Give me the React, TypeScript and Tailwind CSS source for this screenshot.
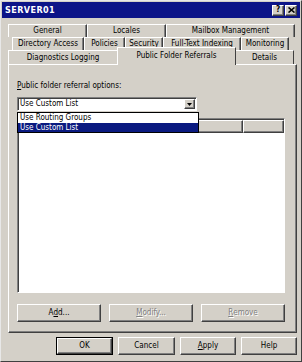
import React from "react";

const raised =
  "bg-[#d4d0c8] border border-t-white border-l-white border-r-[#404040] border-b-[#404040] shadow-[inset_-1px_-1px_0_#808080]";

function Tab({ w, children }: { w: string; children: React.ReactNode }) {
  return (
    <div
      className={`${w} h-[13px] flex items-center justify-center border-t border-l border-r border-t-white border-l-white border-r-[#404040] shadow-[inset_-1px_0_0_#808080] leading-none whitespace-nowrap`}
    >
      {children}
    </div>
  );
}

function Btn({
  w,
  children,
  disabled,
  def,
}: {
  w: string;
  children: React.ReactNode;
  disabled?: boolean;
  def?: boolean;
}) {
  const inner = (
    <div
      className={`${raised} h-full w-full flex items-center justify-center leading-none ${
        disabled ? "text-[#808080] [text-shadow:1px_1px_0_#ffffff]" : "text-black"
      }`}
    >
      {children}
    </div>
  );
  if (def) {
    return <div className={`${w} h-[18px] border border-black`}>{inner}</div>;
  }
  return <div className={`${w} h-[18px]`}>{inner}</div>;
}

export default function App() {
  return (
    <div className="w-[302px] h-[362px] bg-[#d4d0c8] border border-t-[#e8e8e8] border-l-[#e8e8e8] border-r-[#404040] border-b-[#404040] flex flex-col font-['DejaVu_Sans_Condensed','Liberation_Sans',Arial,sans-serif] [font-stretch:condensed] text-[8px] text-black overflow-hidden">
      {/* title bar */}
      <div className="mx-[1px] mt-[1px] h-[16px] bg-[#0c1488] flex items-center justify-between pl-[3px] pr-[3px]">
        <span className="text-white font-bold text-[9px] tracking-[0.4px] leading-none">SERVER01</span>
        <div className="flex gap-[1px]">
          <div className={`${raised} w-[12px] h-[11px] flex items-center justify-center font-bold text-[8px] leading-none`}>?</div>
          <div className={`${raised} w-[12px] h-[11px] flex items-center justify-center`}>
            <svg width="7" height="6" viewBox="0 0 7 6">
              <path d="M0.5 0.5 L6.5 5.5 M6.5 0.5 L0.5 5.5" stroke="black" strokeWidth="1.6" />
            </svg>
          </div>
        </div>
      </div>

      {/* tabs */}
      <div className="mt-[6px] flex flex-col">
        <div className="flex ml-[7px]">
          <Tab w="w-[79px]">General</Tab>
          <Tab w="w-[79px]">Locales</Tab>
          <Tab w="w-[129px]">Mailbox Management</Tab>
        </div>
        <div className="flex ml-[11px]">
          <Tab w="w-[72px]">Directory Access</Tab>
          <Tab w="w-[41px]">Policies</Tab>
          <Tab w="w-[38px]">Security</Tab>
          <Tab w="w-[78px]">Full-Text Indexing</Tab>
          <Tab w="w-[48px]">Monitoring</Tab>
        </div>
        <div className="flex ml-[7px] h-[14px] items-end">
          <div className="w-[109px] h-[14px] flex items-center justify-center border-t border-l border-t-white border-l-white leading-none pt-[1px]">
            Diagnostics Logging
          </div>
          <div className="relative z-10 w-[119px] h-[18px] -mt-[4px] bg-[#d4d0c8] flex justify-center border-t border-l border-r border-t-white border-l-white border-r-[#404040] leading-none pt-[4px] -mb-[1px]">
            Public Folder Referrals
          </div>
          <div className="w-[58px] h-[14px] flex items-center justify-center border-t border-r border-t-white border-r-[#404040] leading-none pt-[1px]">
            Details
          </div>
        </div>
      </div>

      {/* panel */}
      <div className="ml-[7px] w-[289px] h-[269px] border border-t-white border-l-white border-r-[#404040] border-b-[#404040] shadow-[inset_-1px_-1px_0_#808080] flex flex-col pl-[8px] pt-[16px]">
        <div className="leading-[10px] h-[10px]">
          <span className="underline">P</span>ublic folder referral options:
        </div>

        {/* combobox */}
        <div className="relative mt-[6px] w-[180px] h-[14px]">
          <div className="w-full h-full bg-white border border-t-[#808080] border-l-[#808080] border-r-white border-b-white shadow-[inset_1px_1px_0_#404040] flex items-center justify-between pl-[2px] pr-[1px]">
            <span className="leading-none">Use Custom List</span>
            <div className={`${raised} w-[11px] h-[10px] flex items-center justify-center`}>
              <svg width="5" height="3" viewBox="0 0 5 3">
                <path d="M0 0 H5 L2.5 3 Z" fill="black" />
              </svg>
            </div>
          </div>
          <div className="absolute z-20 left-0 top-[15px] w-[182px] h-[21px] bg-white border border-black flex flex-col">
            <div className="h-[10px] flex items-center pl-[2px] leading-none">Use Routing Groups</div>
            <div className="h-[9px] flex items-center pl-[2px] leading-none bg-[#0a1a80] text-white">Use Custom List</div>
          </div>
        </div>

        {/* list view */}
        <div className="mt-[7px] w-[268px] h-[175px] bg-white border border-t-[#808080] border-l-[#808080] border-r-white border-b-white shadow-[inset_1px_1px_0_#404040] flex flex-col pl-[1px] pt-[1px]">
          <div className="flex h-[13px]">
            <div className={`${raised} w-[224px] h-full`}></div>
            <div className={`${raised} w-[41px] h-full`}></div>
          </div>
        </div>

        {/* buttons */}
        <div className="mt-[11px] flex gap-[8px]">
          <Btn w="w-[84px]">
            A<span className="underline">d</span>d...
          </Btn>
          <Btn w="w-[84px]" disabled>
            <span className="underline">M</span>odify...
          </Btn>
          <Btn w="w-[84px]" disabled>
            <span className="underline">R</span>emove
          </Btn>
        </div>
      </div>

      {/* bottom buttons */}
      <div className="mt-[4px] flex justify-end gap-[5px] pr-[4px]">
        <Btn w="w-[57px]" def>
          OK
        </Btn>
        <Btn w="w-[57px]">Cancel</Btn>
        <Btn w="w-[56px]">
          <span className="underline">A</span>pply
        </Btn>
        <Btn w="w-[56px]">Help</Btn>
      </div>
    </div>
  );
}
